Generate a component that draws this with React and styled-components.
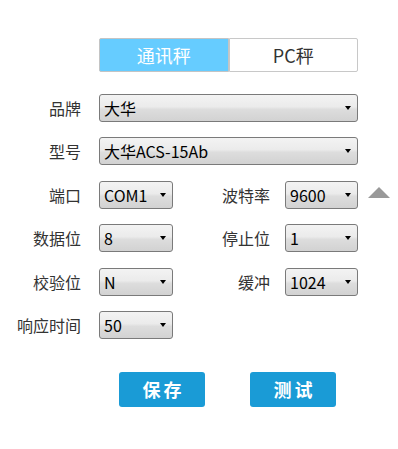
import React, { useState } from "react"
import styled, { createGlobalStyle } from "styled-components"

const GlobalStyle = createGlobalStyle`
    body {
        margin: 0;
        background: #fff;
        font-family: "Noto Sans CJK SC", "Noto Sans", sans-serif;
    }
`

const Page = styled.div`
    width: 398px;
    height: 449px;
    padding-top: 38px;
    box-sizing: border-box;
`

const Tabs = styled.div`
    display: flex;
    margin-left: 99px;
    width: 259px;
    height: 34px;
`

const Tab = styled.div`
    flex: 1;
    display: flex;
    align-items: center;
    justify-content: center;
    font-size: 18px;
    box-sizing: border-box;
    border: 1px solid ${p => (p.$active ? "#c4c4c4" : "#c8c8c8")};
    border-radius: ${p => (p.$first ? "2px 0 0 2px" : "0 2px 2px 0")};
    background: ${p => (p.$active ? "#66ccff" : "#fff")};
    color: ${p => (p.$active ? "#fff" : "#333")};
    cursor: pointer;
`

const Form = styled.div`
    display: flex;
    flex-direction: column;
    gap: 15.4px;
    margin-top: 22px;
`

const Row = styled.div`
    display: flex;
    align-items: center;
    height: 28px;
`

const Label = styled.div`
    width: ${p => p.$w}px;
    text-align: right;
    font-size: 16px;
    color: #333;
    margin-right: ${p => p.$gap}px;
    white-space: nowrap;
`

const SelectBox = styled.div`
    width: ${p => p.$w}px;
    height: 28px;
    box-sizing: border-box;
    display: flex;
    align-items: center;
    justify-content: space-between;
    padding: 0 6px 0 4px;
    border: 1px solid #7a7a7a;
    border-radius: 3px;
    background: linear-gradient(#f3f3f3 0%, #ebebeb 45%, #dddddd 55%, #d2d2d2 100%);
    font-size: 16px;
    color: #000;
`

const Arrow = styled.span`
    width: 0;
    height: 0;
    border-left: 3.5px solid transparent;
    border-right: 3.5px solid transparent;
    border-top: 4px solid #000;
`

const Collapse = styled.span`
    margin-left: 10px;
    width: 0;
    height: 0;
    border-left: 11px solid transparent;
    border-right: 11px solid transparent;
    border-bottom: 11px solid #999;
    margin-top: -4px;
`

const Buttons = styled.div`
    display: flex;
    gap: 45px;
    margin-left: 119px;
    margin-top: 33px;
`

const Button = styled.button`
    width: 86px;
    height: 35px;
    border: none;
    border-radius: 3px;
    background: #1a9bd6;
    color: #fff;
    font-family: "Noto Sans CJK SC", sans-serif;
    font-size: 18px;
    font-weight: bold;
    letter-spacing: 3px;
    padding: 0 0 0 3px;
`

const Select = ({ value, w }) => (
    <SelectBox $w={w}>
        <span>{value}</span>
        <Arrow />
    </SelectBox>
)

const App = () => {
    const [tab, setTab] = useState(0)

    return (
        <Page>
            <GlobalStyle />
            <Tabs>
                <Tab $first $active={tab === 0} onClick={() => setTab(0)}>通讯秤</Tab>
                <Tab $active={tab === 1} onClick={() => setTab(1)}>PC秤</Tab>
            </Tabs>
            <Form>
                <Row>
                    <Label $w={81} $gap={18}>品牌</Label>
                    <Select value="大华" w={259} />
                </Row>
                <Row>
                    <Label $w={81} $gap={18}>型号</Label>
                    <Select value="大华ACS-15Ab" w={259} />
                </Row>
                <Row>
                    <Label $w={81} $gap={18}>端口</Label>
                    <Select value="COM1" w={74} />
                    <Label $w={97} $gap={15}>波特率</Label>
                    <Select value="9600" w={73} />
                    <Collapse />
                </Row>
                <Row>
                    <Label $w={81} $gap={18}>数据位</Label>
                    <Select value="8" w={74} />
                    <Label $w={97} $gap={15}>停止位</Label>
                    <Select value="1" w={73} />
                </Row>
                <Row>
                    <Label $w={81} $gap={18}>校验位</Label>
                    <Select value="N" w={74} />
                    <Label $w={97} $gap={15}>缓冲</Label>
                    <Select value="1024" w={73} />
                </Row>
                <Row>
                    <Label $w={81} $gap={18}>响应时间</Label>
                    <Select value="50" w={74} />
                </Row>
            </Form>
            <Buttons>
                <Button>保存</Button>
                <Button>测试</Button>
            </Buttons>
        </Page>
    )
}

export default App
